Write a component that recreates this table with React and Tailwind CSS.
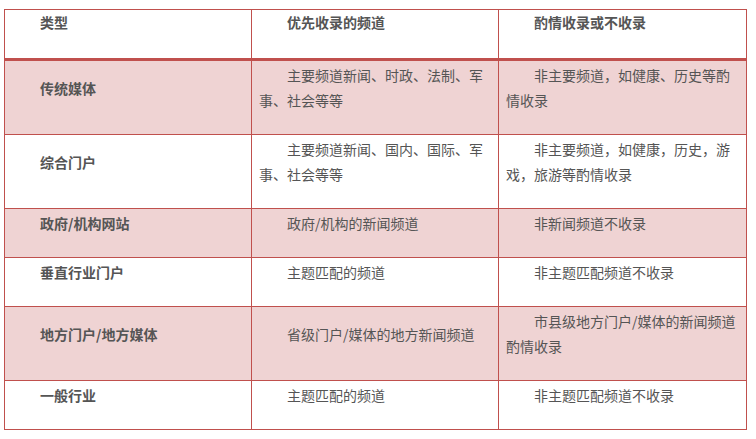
const rows = [
  {
    type: "传统媒体",
    first: "主要频道新闻、时政、法制、军事、社会等等",
    maybe: "非主要频道，如健康、历史等酌情收录",
    pink: true,
  },
  {
    type: "综合门户",
    first: "主要频道新闻、国内、国际、军事、社会等等",
    maybe: "非主要频道，如健康，历史，游戏，旅游等酌情收录",
    pink: false,
  },
  {
    type: "政府/机构网站",
    first: "政府/机构的新闻频道",
    maybe: "非新闻频道不收录",
    pink: true,
  },
  {
    type: "垂直行业门户",
    first: "主题匹配的频道",
    maybe: "非主题匹配频道不收录",
    pink: false,
  },
  {
    type: "地方门户/地方媒体",
    first: "省级门户/媒体的地方新闻频道",
    maybe: "市县级地方门户/媒体的新闻频道酌情收录",
    pink: true,
  },
  {
    type: "一般行业",
    first: "主题匹配的频道",
    maybe: "非主题匹配频道不收录",
    pink: false,
  },
];

const base =
  "border border-[#c0504d] px-[7px] align-middle indent-[28px] leading-[25px]";
const head = `${base} pt-0 pb-[23px] text-left font-bold border-b-[3px]`;
const cell = `${base} pt-[2px] pb-[21px]`;

export default function App() {
  return (
    <div
      className="w-[756px] h-[439px] bg-white pt-[9px] pl-[4px] text-[14px] text-[#555555]"
      style={{ fontFamily: '"Noto Sans CJK SC", "Noto Sans", sans-serif' }}
    >
      <table className="w-[742px] border-collapse table-fixed">
        <colgroup>
          <col className="w-[247px]" />
          <col className="w-[247px]" />
          <col className="w-[248px]" />
        </colgroup>
        <thead>
          <tr>
            <th className={head}>类型</th>
            <th className={head}>优先收录的频道</th>
            <th className={head}>酌情收录或不收录</th>
          </tr>
        </thead>
        <tbody>
          {rows.map((r) => (
            <tr key={r.type} className={r.pink ? "bg-[#efd3d3]" : "bg-white"}>
              <td className={`${cell} font-bold`}>{r.type}</td>
              <td className={cell}>{r.first}</td>
              <td className={cell}>{r.maybe}</td>
            </tr>
          ))}
        </tbody>
      </table>
    </div>
  );
}
